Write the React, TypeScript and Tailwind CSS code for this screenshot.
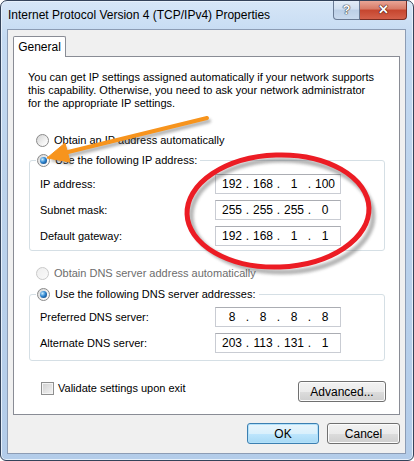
import React from "react";

function Radio({ checked, disabled }: { checked?: boolean; disabled?: boolean }) {
  return (
    <span
      className={
        "flex h-[13px] w-[13px] shrink-0 items-center justify-center rounded-full border " +
        (disabled
          ? "border-[#c9c9c9] bg-[linear-gradient(135deg,#eeeeee,#fafafa)]"
          : "border-[#8a8a8a] bg-[linear-gradient(135deg,#d4d4d4,#f6f6f6_70%,#ffffff)]")
      }
    >
      {checked && (
        <span className="h-[7px] w-[7px] rounded-full bg-[radial-gradient(circle_at_35%_35%,#c8ecff,#2f86d0_45%,#0a2f63)]" />
      )}
    </span>
  );
}

function IpBox({ parts }: { parts: string[] }) {
  return (
    <div className="flex h-[20px] w-[126px] items-center border border-[#c9ccd3] border-t-[#abadb3] bg-white pl-[4px] text-[12px] text-black">
      {parts.map((p, i) => (
        <React.Fragment key={i}>
          <span className="w-[24px] text-center">{p}</span>
          {i < 3 && <span className="w-[7px] text-center">.</span>}
        </React.Fragment>
      ))}
    </div>
  );
}

function Button({ children, def, w }: { children: React.ReactNode; def?: boolean; w: string }) {
  return (
    <div
      className={
        "flex h-[21px] items-center justify-center rounded-[3px] border text-[12px] text-black " +
        w +
        " " +
        (def
          ? "border-[#3c7fb1] bg-[linear-gradient(#e9f5fc,#d9f0fc_50%,#bee6fd_51%,#a7d9f5)] shadow-[inset_0_0_0_1px_#b3e1fa]"
          : "border-[#707070] bg-[linear-gradient(#f2f2f2,#ebebeb_50%,#dddddd_51%,#cfcfcf)] shadow-[inset_0_0_0_1px_#fcfcfc]")
      }
    >
      {children}
    </div>
  );
}

export default function App() {
  return (
    <div className="relative h-[461px] w-[414px] font-['Liberation_Sans',Arial,sans-serif] text-[11px] text-black">
      <div className="flex h-full w-full flex-col rounded-t-[7px] rounded-b-[6px] border border-[#34435a] bg-[linear-gradient(180deg,#d6e6f7_0%,#c4daf2_8%,#bcd3ec_40%,#b3cce9_100%)] shadow-[inset_0_0_0_1px_#e6f0fb]">
        {/* Title bar */}
        <div className="flex h-[28px] shrink-0 items-start justify-between">
          <div className="pl-[7px] pt-[7px] text-[12px] leading-[15px] text-black">
            Internet Protocol Version 4 (TCP/IPv4) Properties
          </div>
          <div className="mr-[6px] flex h-[19px]">
            <div className="flex h-[19px] w-[27px] items-center justify-center rounded-bl-[4px] border border-t-0 border-[#6a7b94] bg-[linear-gradient(#e2ecf7,#d0dff0_45%,#bccfe6_50%,#c9daee)] text-[13px] font-bold text-white [text-shadow:0_0_1px_#333,0_0_1px_#333,0_0_1px_#333]">
              ?
            </div>
            <div className="flex h-[19px] w-[47px] items-center justify-center rounded-br-[4px] border border-l-0 border-t-0 border-[#7a2c22] bg-[linear-gradient(#e9a596,#d77a66_45%,#c6452e_50%,#d4604a)] text-[13px] font-bold text-white [text-shadow:0_0_1px_#3a0a05,0_0_1px_#3a0a05,0_0_1px_#3a0a05]">
              ✕
            </div>
          </div>
        </div>

        {/* Client area */}
        <div className="mb-[6px] ml-[6px] mr-[7px] flex flex-1 flex-col border border-[#8c9cb4] bg-[#f0f0f0] px-[5px] pt-[6px]">
          {/* Tab strip */}
          <div className="flex">
            <div className="relative z-10 -mb-px flex h-[21px] w-[53px] items-center justify-center rounded-t-[2px] border border-b-0 border-[#898c95] bg-white text-[12px]">
              General
            </div>
          </div>
          {/* Panel */}
          <div className="flex h-[359px] flex-col border border-[#898c95] bg-white pt-[14px]">
            <p className="pl-[14px] text-[11px] leading-[13px]">
              You can get IP settings assigned automatically if your network supports
              <br />
              this capability. Otherwise, you need to ask your network administrator
              <br />
              for the appropriate IP settings.
            </p>

            <div className="ml-[22px] mt-[23px] flex h-[14px] items-center gap-[5px] text-[11px]">
              <Radio />
              <span>Obtain an IP address automatically</span>
            </div>

            <fieldset className="ml-[15px] mt-[6px] w-[356px] rounded-[3px] border border-[#d5dfe5] pb-[4px] pl-[10px]">
              <legend className="-ml-[4px] flex h-[14px] items-center gap-[5px] bg-white px-[1px] pr-[3px] text-[11px]">
                <Radio checked />
                <span>Use the following IP address:</span>
              </legend>
              <div className="flex flex-col gap-[6px] pt-[7px] text-[11px]">
                <div className="flex items-center">
                  <span className="w-[175px]">IP address:</span>
                  <IpBox parts={["192", "168", "1", "100"]} />
                </div>
                <div className="flex items-center">
                  <span className="w-[175px]">Subnet mask:</span>
                  <IpBox parts={["255", "255", "255", "0"]} />
                </div>
                <div className="flex items-center">
                  <span className="w-[175px]">Default gateway:</span>
                  <IpBox parts={["192", "168", "1", "1"]} />
                </div>
              </div>
            </fieldset>

            <div className="ml-[22px] mt-[15px] flex h-[14px] items-center gap-[5px] text-[11px] text-[#6d6d6d]">
              <Radio disabled />
              <span>Obtain DNS server address automatically</span>
            </div>

            <fieldset className="ml-[15px] mt-[7px] w-[356px] rounded-[3px] border border-[#d5dfe5] pb-[7px] pl-[10px]">
              <legend className="-ml-[4px] flex h-[14px] items-center gap-[5px] bg-white px-[1px] pr-[3px] text-[11px]">
                <Radio checked />
                <span>Use the following DNS server addresses:</span>
              </legend>
              <div className="flex flex-col gap-[6px] pt-[6px] text-[11px]">
                <div className="flex items-center">
                  <span className="w-[175px]">Preferred DNS server:</span>
                  <IpBox parts={["8", "8", "8", "8"]} />
                </div>
                <div className="flex items-center">
                  <span className="w-[175px]">Alternate DNS server:</span>
                  <IpBox parts={["203", "113", "131", "1"]} />
                </div>
              </div>
            </fieldset>

            <div className="ml-[27px] mr-[13px] mt-[19px] flex items-start justify-between">
              <div className="flex items-center gap-[4px] text-[11px]">
                <span className="h-[13px] w-[13px] border border-[#8e8f8f] bg-[linear-gradient(135deg,#cfcfcf,#f4f4f4)] shadow-[inset_0_0_0_1px_#f4f4f4]" />
                <span>Validate settings upon exit</span>
              </div>
              <div className="mt-[1px]">
                <Button w="w-[88px] h-[20px]">Advanced...</Button>
              </div>
            </div>
          </div>

          {/* Bottom buttons */}
          <div className="mt-[8px] flex justify-end gap-[8px]">
            <Button def w="w-[72px]">OK</Button>
            <Button w="w-[73px]">Cancel</Button>
          </div>
        </div>
      </div>

      {/* Annotation overlay */}
      <svg className="pointer-events-none absolute left-0 top-0" width="414" height="461" viewBox="0 0 414 461">
        <defs>
          <filter id="sh" x="-20%" y="-20%" width="140%" height="140%">
            <feGaussianBlur stdDeviation="1.6" />
          </filter>
        </defs>
        <g filter="url(#sh)" opacity="0.45" transform="translate(2,3)">
          <line x1="207" y1="118" x2="64" y2="153" stroke="#555" strokeWidth="4" strokeLinecap="round" />
          <polygon points="48,158 65,144 70,162" fill="#555" />
        </g>
        <line x1="207" y1="118" x2="64" y2="153" stroke="#f7941d" strokeWidth="4" strokeLinecap="round" />
        <polygon points="47,158 65,143 70,162" fill="#f7941d" stroke="#f7941d" strokeWidth="1" strokeLinejoin="round" />
        <ellipse cx="282" cy="216" rx="91" ry="56" fill="none" stroke="#444" strokeWidth="5" opacity="0.4" filter="url(#sh)" />
        <ellipse cx="278" cy="211" rx="91" ry="56" fill="none" stroke="#ec1c24" strokeWidth="5" transform="rotate(-2 278 211)" />
      </svg>
    </div>
  );
}
